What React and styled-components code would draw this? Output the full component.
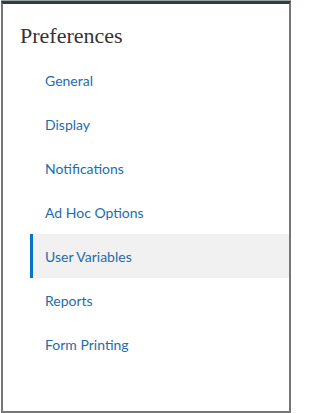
import React from "react";
import styled, { createGlobalStyle } from "styled-components";

const GlobalStyle = createGlobalStyle`
  html, body {
    margin: 0;
    padding: 0;
    background: #ffffff;
  }
`;

const Panel = styled.nav`
  box-sizing: border-box;
  width: 290px;
  height: 412px;
  margin-left: 1px;
  border: 2px solid #767676;
  border-top: 3px solid #2f3d40;
  box-shadow: 0 -1px 0 #9aa3a5;
  margin-top: 1px;
  background: #ffffff;
  padding-top: 20px;
`;

const Title = styled.h2`
  margin: 0 0 10px 17px;
  font-family: "Liberation Serif", "DejaVu Serif", serif;
  font-weight: normal;
  font-size: 22px;
  line-height: 24px;
  color: #333333;
`;

const List = styled.ul`
  list-style: none;
  margin: 0;
  padding: 0 0 0 27px;
`;

const Item = styled.li`
  display: flex;
  align-items: center;
  height: 44px;
  padding-left: ${(p) => (p.$active ? "12px" : "15px")};
  border-left: ${(p) => (p.$active ? "3px solid #0572ce" : "none")};
  background: ${(p) => (p.$active ? "#f1f1f1" : "transparent")};
  font-family: Lato, "Open Sans", sans-serif;
  font-size: 14px;
  color: #1f6cab;
  cursor: pointer;
`;

const items = [
  "General",
  "Display",
  "Notifications",
  "Ad Hoc Options",
  "User Variables",
  "Reports",
  "Form Printing",
];

export default function App() {
  return (
    <>
      <GlobalStyle />
      <Panel>
        <Title>Preferences</Title>
        <List>
          {items.map((label) => (
            <Item key={label} $active={label === "User Variables"}>
              {label}
            </Item>
          ))}
        </List>
      </Panel>
    </>
  );
}
